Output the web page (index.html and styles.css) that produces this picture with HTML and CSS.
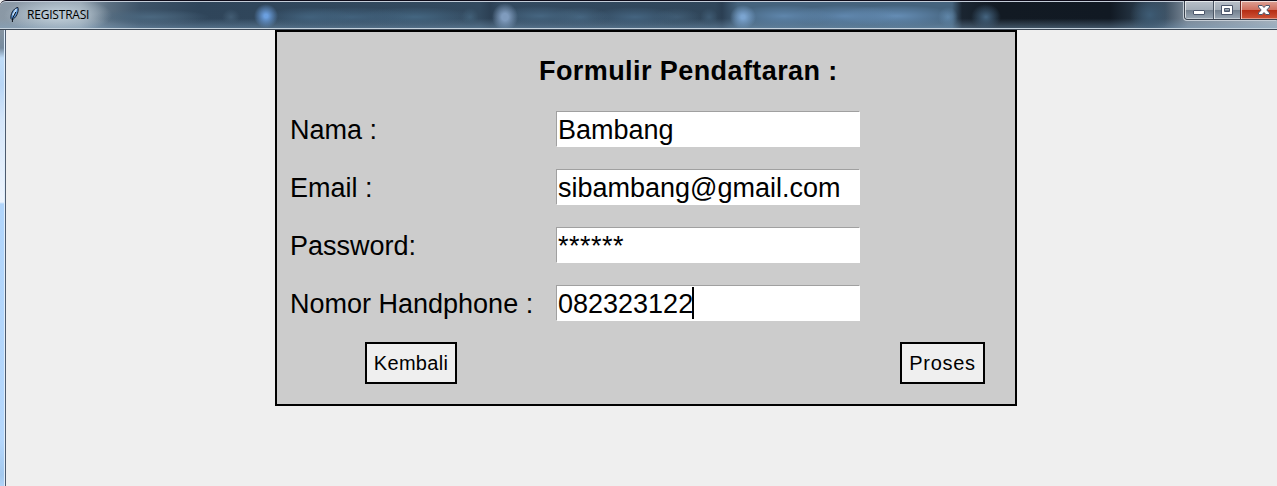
FILE: index.html
```html
<!DOCTYPE html>
<html lang="id">
<head>
<meta charset="utf-8">
<title>REGISTRASI</title>
<link rel="stylesheet" href="styles.css">
</head>
<body>
<div class="window">
  <header class="titlebar">
    <svg class="feather" width="12" height="18" viewBox="0 0 12 18">
      <path d="M2 12.5C1.3 8.5 4 2.5 8.8 1.4C10 4.5 8.3 10 4.2 13.2L3 13.6Z" fill="#5b97dc" stroke="#111b2b" stroke-width="1"/>
      <path d="M3.8 9.5L7.4 3" stroke="#c4dcf2" stroke-width="1.6"/>
      <path d="M6.8 6L3.4 12.8V16" stroke="#0b1018" stroke-width="1" fill="none"/>
    </svg>
    <span class="caption">REGISTRASI</span>
    <div class="controls">
      <span class="control minimize"><svg width="14" height="14" viewBox="0 0 14 14"><rect x="1.5" y="7.5" width="11" height="4" rx=".5" fill="#fff" stroke="#4c566b"/></svg></span>
      <span class="control maximize"><svg width="14" height="14" viewBox="0 0 14 14"><path d="M1.5 2.5H12.5V11.5H1.5ZM4.5 5.5V8.5H9.5V5.5Z" fill="#fff" fill-rule="evenodd" stroke="#4c566b"/></svg></span>
      <span class="control close"><svg width="14" height="14" viewBox="0 0 14 14"><path d="M1.5 2.5H5.2L7 4.5L8.8 2.5H12.5V4L9.8 7L12.5 10V11.5H8.8L7 9.5L5.2 11.5H1.5V10L4.2 7L1.5 4Z" fill="#fff" stroke="#4c566b"/></svg></span>
    </div>
  </header>
  <div class="body">
    <div class="edge"></div>
    <main class="client">
      <form class="panel">
        <h1 class="heading">Formulir Pendaftaran :</h1>
        <div class="fields">
          <span class="label">Nama :</span><div class="entry">Bambang</div>
          <span class="label">Email :</span><div class="entry">sibambang@gmail.com</div>
          <span class="label">Password:</span><div class="entry secret">******</div>
          <span class="label">Nomor Handphone :</span><div class="entry">082323122<i class="caret"></i></div>
        </div>
        <div class="actions">
          <button type="button" class="button back">Kembali</button>
          <button type="button" class="button submit">Proses</button>
        </div>
      </form>
    </main>
  </div>
</div>
</body>
</html>
```
FILE: styles.css
```css
* { box-sizing: border-box; }
body {
  margin: 0;
  background: #efefef;
  font-family: "Liberation Sans", Arial, sans-serif;
  color: #000;
  overflow: hidden;
}
.window {
  display: flex;
  flex-direction: column;
  height: 486px;
}
.titlebar {
  display: flex;
  align-items: flex-start;
  flex: none;
  height: 30px;
  padding-left: 8px;
  border-top: 1px solid #0d0a18;
  border-top-left-radius: 6px;
  box-shadow: inset 0 1px #c3ccd8, inset 0 -1px #3c4856, inset 0 -2px #c6d3de;
  background:
    radial-gradient(ellipse 54px 18px at 58px 14px, rgba(185,200,211,.9) 30%, rgba(185,200,211,0)),
    radial-gradient(ellipse 12px 12px at 266px 15px, #6b9fdf 15%, rgba(107,159,223,0)),
    radial-gradient(ellipse 13px 14px at 505px 16px, #7f9bbd 25%, rgba(127,155,189,0)),
    radial-gradient(ellipse 13px 12px at 743px 16px, #7ba4d0 15%, rgba(123,164,208,0)),
    radial-gradient(ellipse 60px 8px at 150px 16px, #4b6880, rgba(75,104,128,0)),
    radial-gradient(ellipse 9px 8px at 231px 16px, #425c73, rgba(66,92,115,0)),
    radial-gradient(ellipse 45px 10px at 310px 16px, #42627d, rgba(66,98,125,0)),
    radial-gradient(ellipse 60px 10px at 352px 16px, #42627d, rgba(66,98,125,0)),
    radial-gradient(ellipse 60px 10px at 415px 16px, #446681, rgba(68,102,129,0)),
    radial-gradient(ellipse 9px 9px at 470px 16px, #415f77, rgba(65,95,119,0)),
    radial-gradient(ellipse 45px 10px at 540px 15px, #466681, rgba(70,102,129,0)),
    radial-gradient(ellipse 30px 10px at 580px 16px, #466681, rgba(70,102,129,0)),
    radial-gradient(ellipse 45px 10px at 635px 16px, #446480, rgba(68,100,128,0)),
    radial-gradient(ellipse 24px 9px at 677px 16px, #405c74, rgba(64,92,116,0)),
    radial-gradient(ellipse 9px 9px at 709px 16px, #3f5b73, rgba(63,91,115,0)),
    radial-gradient(ellipse 50px 11px at 784px 15px, #5f86ac, rgba(95,134,172,0)),
    radial-gradient(ellipse 55px 11px at 845px 15px, #6087ae, rgba(96,135,174,0)),
    radial-gradient(ellipse 60px 11px at 896px 15px, #658db5, rgba(101,141,181,0)),
    radial-gradient(ellipse 10px 10px at 948px 16px, #5f85a7, rgba(95,133,167,0)),
    radial-gradient(ellipse 15px 13px at 986px 16px, #456581, rgba(69,101,129,0)),
    radial-gradient(ellipse 20px 20px at 1150px 14px, #3e5c75, rgba(62,92,117,0)),
    linear-gradient(to bottom, rgba(130,165,195,0) 60%, rgba(130,165,195,.5)),
    linear-gradient(to right, #8a98a5 0, #94a3b0 80px, #5c7082 108px, #3d5368 140px, #2f455a 200px, #334a5f 480px, #2c4054 490px, #334a60 500px, #30465a 715px, #2b3f53 722px, #45637d 738px, #45637d 952px, #1a2531 962px, #121a23 1000px, #111923 1110px, #293a4a 1140px, #3d5062 1165px, #7c8997 1188px, #a9b3bd 1277px);
}
.feather { margin: 5px 0 0 1px; }
.caption {
  margin: 5px 0 0 6px;
  font: 12px/17px "Open Sans", "Noto Sans", sans-serif;
  letter-spacing: -.2px;
}
.controls {
  display: flex;
  width: 93px;
  height: 19px;
  margin-left: auto;
  border: 1px solid #39424f;
  border-width: 0 0 1px 1px;
  border-bottom-left-radius: 4px;
  box-shadow: -1px 1px #c4ccd5;
  overflow: hidden;
}
.control {
  display: flex;
  justify-content: center;
  padding-top: 2px;
  box-shadow: inset 1px 1px rgba(255,255,255,.65), inset 0 -1px rgba(255,255,255,.4);
  background: linear-gradient(#b9c0c9 0, #a4adb8 48%, #74818f 52%, #9ba8b5 100%);
}
.minimize { width: 28px; }
.maximize { width: 27px; border-left: 1px solid #4a5462; }
.close {
  width: 37px;
  padding-left: 9px;
  border-left: 1px solid #6e2722;
  background: linear-gradient(#dda195 0, #d0705f 48%, #b52d14 52%, #cf5438 100%);
}
.control svg { flex: none; }
.body { display: flex; flex: 1; }
.edge {
  width: 6px;
  border-right: 1px solid #4c5a6e;
  box-shadow: inset -1px 0 #dfeefc;
  background: linear-gradient(#8593a0 0, #768b9f 18px, #bfdcf8 28px, #b9d6f5 55px, #d5e6fa 90px, #edf4fd 172px, #b1d5fb 174px, #b5d7fc 410px, #a4c9ee 445px, #b1d4f8 456px);
}
.client { flex: 1; background: #efefef; }
.panel {
  width: 742px;
  height: 376px;
  margin-left: 269px;
  padding: 19px 0 0 13px;
  border: 2px solid #000;
  background: #ccc;
}
.heading {
  margin: 0 0 20px 249px;
  font-size: 27px;
  line-height: 40px;
  letter-spacing: .42px;
}
.fields {
  display: grid;
  grid-template-columns: 266px 304px;
  grid-auto-rows: 36px;
  row-gap: 22px;
  font-size: 27px;
  line-height: 36px;
  white-space: nowrap;
}
.label { line-height: 38px; }
.entry {
  display: flex;
  align-items: flex-start;
  padding-left: 1px;
  border: 1px solid;
  border-color: #a0a0a0 #fff #fff #a0a0a0;
  background: #fff;
}
.secret { letter-spacing: .5px; }
.caret { width: 2px; height: 32px; margin: 1px 0 0 -1px; background: #000; }
.actions {
  display: flex;
  justify-content: space-between;
  padding: 21px 30px 0 75px;
}
.button {
  height: 42px;
  padding: 0;
  border: 2px solid #000;
  border-radius: 0;
  background: #efefef;
  color: #000;
  font: 20px "Liberation Sans", Arial, sans-serif;
}
.back { width: 92px; letter-spacing: .3px; }
.submit { width: 85px; letter-spacing: .7px; }
```
